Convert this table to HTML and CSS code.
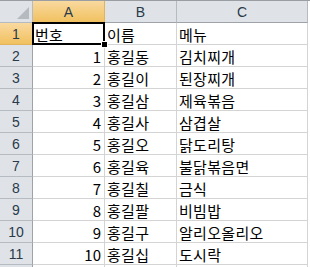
FILE: index.html
```html
<!DOCTYPE html>
<html lang="ko">
<head>
<meta charset="utf-8">
<link rel="stylesheet" href="styles.css">
</head>
<body>
<div class="sheet">
  <div class="hd corner"><span class="tri"></span></div>
  <div class="hd col sel">A</div>
  <div class="hd col">B</div>
  <div class="hd col">C</div>

  <div class="hd row sel">1</div>
  <div class="cell txt active">번호<span class="frame"></span><span class="handle"></span></div>
  <div class="cell txt">이름</div>
  <div class="cell txt">메뉴</div>

  <div class="hd row">2</div><div class="cell num">1</div><div class="cell txt">홍길동</div><div class="cell txt">김치찌개</div>
  <div class="hd row">3</div><div class="cell num">2</div><div class="cell txt">홍길이</div><div class="cell txt">된장찌개</div>
  <div class="hd row">4</div><div class="cell num">3</div><div class="cell txt">홍길삼</div><div class="cell txt">제육볶음</div>
  <div class="hd row">5</div><div class="cell num">4</div><div class="cell txt">홍길사</div><div class="cell txt">삼겹살</div>
  <div class="hd row">6</div><div class="cell num">5</div><div class="cell txt">홍길오</div><div class="cell txt">닭도리탕</div>
  <div class="hd row">7</div><div class="cell num">6</div><div class="cell txt">홍길육</div><div class="cell txt">불닭볶음면</div>
  <div class="hd row">8</div><div class="cell num">7</div><div class="cell txt">홍길칠</div><div class="cell txt">금식</div>
  <div class="hd row">9</div><div class="cell num">8</div><div class="cell txt">홍길팔</div><div class="cell txt">비빔밥</div>
  <div class="hd row">10</div><div class="cell num">9</div><div class="cell txt">홍길구</div><div class="cell txt">알리오올리오</div>
  <div class="hd row">11</div><div class="cell num">10</div><div class="cell txt">홍길십</div><div class="cell txt">도시락</div>
  <div class="hd row"></div><div class="cell"></div><div class="cell"></div><div class="cell"></div>
</div>
</body>
</html>
```

FILE: styles.css
```css
html, body {
  margin: 0;
  padding: 0;
  background: #ffffff;
  overflow: hidden;
}
.sheet {
  display: grid;
  grid-template-columns: 33px 72px 72px 131px;
  grid-template-rows: 22px;
  grid-auto-rows: 22px;
  border-top: 1px solid #9a9ea3;
  font-family: "Noto Sans CJK KR", "Noto Sans", sans-serif;
  font-size: 15px;
  color: #000;
}
.sheet > div {
  box-sizing: border-box;
  border-right: 1px solid #d4d4d4;
  border-bottom: 1px solid #d4d4d4;
  display: flex;
  align-items: center;
  line-height: 1;
  white-space: nowrap;
  position: relative;
}
.hd {
  background: #dfe3e8;
  color: #2a3a4a;
  font-family: "Liberation Sans", "Noto Sans", sans-serif;
  font-size: 14px;
  justify-content: center;
}
.sheet > .hd {
  border-right-color: #b6bbc1;
  border-bottom-color: #b6bbc1;
}
.sheet > .col {
  border-bottom-color: #9ea3a9;
  padding-top: 1px;
}
.sheet > .row {
  border-right-color: #9ea3a9;
  padding-top: 1px;
}
.sheet > .sel {
  background: linear-gradient(#f9d99f, #f1c15f);
  border-right-color: #e0b45a;
  border-bottom-color: #c29543;
}
.sheet > .row.sel {
  border-right-color: #c29543;
  border-bottom-color: #e0b45a;
}
.corner {
  background: #dfe3e8;
}
.tri {
  position: absolute;
  right: 3px;
  bottom: 3px;
  width: 0;
  height: 0;
  border-left: 12px solid transparent;
  border-bottom: 12px solid #b5bac0;
}
.txt {
  padding-left: 2px;
  padding-top: 2px;
  letter-spacing: 0.3px;
}
.num {
  justify-content: flex-end;
  padding-right: 3px;
  padding-top: 2px;
}
.frame {
  position: absolute;
  left: -1px;
  top: -1px;
  right: -1px;
  bottom: -1px;
  border: 2px solid #000;
  pointer-events: none;
}
.handle {
  position: absolute;
  right: -4px;
  bottom: -4px;
  width: 5px;
  height: 5px;
  background: #000;
  border: 1px solid #fff;
  z-index: 2;
}
```
